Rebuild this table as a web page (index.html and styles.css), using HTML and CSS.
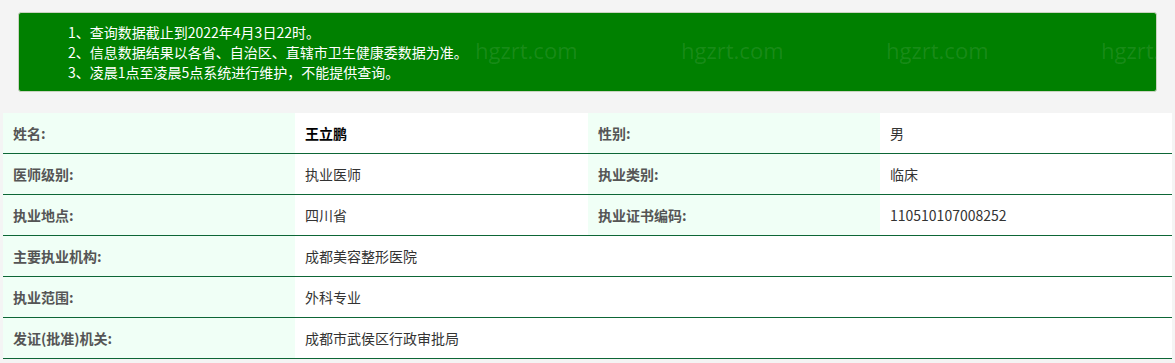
FILE: index.html
```html
<!DOCTYPE html>
<html lang="zh-CN">
<head>
<meta charset="utf-8">
<title>医师执业信息查询</title>
<link rel="stylesheet" href="styles.css">
</head>
<body>
<div class="page">
  <div class="notice">
    <ul class="notice-list">
      <li>1、查询数据截止到2022年4月3日22时。</li>
      <li>2、信息数据结果以各省、自治区、直辖市卫生健康委数据为准。</li>
      <li>3、凌晨1点至凌晨5点系统进行维护，不能提供查询。</li>
    </ul>
    <span class="wm wm-c">hgzrt.com</span>
    <span class="wm wm-d">hgzrt.com</span>
    <span class="wm wm-e">hgzrt.com</span>
    <span class="wm wm-f">hgzrt.</span>
  </div>
  <table class="info">
    <colgroup>
      <col class="c1"><col class="c2"><col class="c3"><col class="c4">
    </colgroup>
    <tr>
      <th>姓名:</th><td class="name">王立鹏</td>
      <th>性别:</th><td>男</td>
    </tr>
    <tr>
      <th>医师级别:</th><td>执业医师</td>
      <th>执业类别:</th><td>临床</td>
    </tr>
    <tr>
      <th>执业地点:</th><td>四川省</td>
      <th>执业证书编码:</th><td>110510107008252</td>
    </tr>
    <tr>
      <th>主要执业机构:</th><td colspan="3">成都美容整形医院</td>
    </tr>
    <tr>
      <th>执业范围:</th><td colspan="3">外科专业</td>
    </tr>
    <tr>
      <th>发证(批准)机关:</th><td colspan="3">成都市武侯区行政审批局</td>
    </tr>
  </table>
</div>
</body>
</html>
```

FILE: styles.css
```css
html, body {
  margin: 0;
  padding: 0;
  background: #f4f4f4;
}

body {
  font-family: "Noto Sans CJK SC", "Noto Sans", "Liberation Sans", sans-serif;
  font-size: 14px;
  color: #333;
}

.page {
  padding: 12px 3px 0;
}

.notice {
  position: relative;
  overflow: hidden;
  margin: 0 15px;
  height: 78px;
  box-sizing: content-box;
  background: #008000;
  border: 1px solid #c9d3c0;
  border-radius: 3px;
}

.notice-list {
  list-style: none;
  margin: 0;
  padding: 9px 0 9px 49px;
  color: #fff;
  line-height: 20px;
  font-size: 14px;
  position: relative;
  z-index: 1;
}

.wm {
  position: absolute;
  font-family: "Open Sans", "Noto Sans", sans-serif;
  font-size: 22px;
  line-height: 24px;
  color: rgba(255, 255, 255, 0.1);
  white-space: nowrap;
  pointer-events: none;
}

.wm-c { left: 456px; top: 25px; }
.wm-d { left: 662px; top: 25px; }
.wm-e { left: 867px; top: 25px; }
.wm-f { left: 1082px; top: 25px; }

.info {
  margin-top: 21px;
  width: 1169px;
  border-collapse: collapse;
  table-layout: fixed;
}

.c1 { width: 292px; }
.c2 { width: 293px; }
.c3 { width: 292px; }
.c4 { width: 292px; }

.info th,
.info td {
  height: 40px;
  padding: 0 10px;
  border-bottom: 1px solid #0d6636;
  text-align: left;
  vertical-align: middle;
  font-size: 14px;
  line-height: 20px;
}

.info th {
  background: #f0fff6;
  color: #555;
  font-weight: bold;
}

.info td {
  background: #fff;
  color: #333;
}

.info td.name {
  color: #000;
  font-weight: bold;
}
```
